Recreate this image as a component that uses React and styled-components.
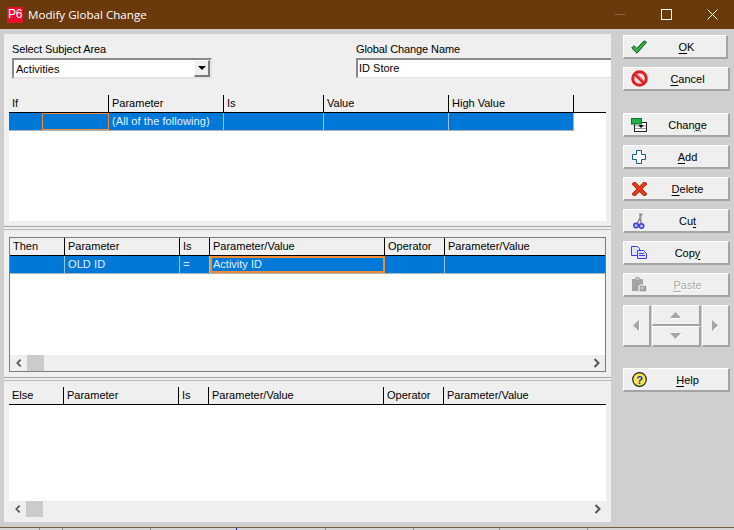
import React from "react";
import styled, { createGlobalStyle } from "styled-components";

const Global = createGlobalStyle`
  html, body { margin: 0; padding: 0; background: #cfcfcf; overflow: hidden; }
  * { box-sizing: border-box; }
  #root { width: 734px; height: 530px; }
`;

const Window = styled.div`
  width: 734px; height: 530px; display: flex; flex-direction: column;
  background: #cfcfcf; font-family: "Liberation Sans", Arial, sans-serif;
  font-size: 11px; color: #000; overflow: hidden;
`;
const TitleBar = styled.header`
  height: 29px; flex: none; background: #6b3a0c; display: flex; align-items: center;
  padding-left: 7px; color: #fff;
`;
const AppLogo = styled.span`
  width: 16px; height: 16px; background: #e8112d; color: #fff; font-size: 12px; line-height: 15px;
  text-align: center; margin-right: 5px; letter-spacing: -0.3px;
`;
const TitleText = styled.span`
  flex: 1; font-family: "Open Sans", sans-serif; font-size: 11.6px;
`;
const WinButton = styled.span`
  width: 46px; height: 29px; display: flex; align-items: center; justify-content: center;
`;
const WinButtons = styled.div`
  display: flex; margin-right: -1px;
`;
const Body = styled.div`
  flex: 1; display: flex; padding: 5px 0 0 4px; min-height: 0;
`;
const LeftColumn = styled.main`
  width: 607px; height: 488px; display: flex; flex-direction: column;
`;
const Pane = styled.section`
  background: #efefef; display: flex; flex-direction: column; padding: 0 5px; flex: none;
  height: ${p => p.$h}px; padding-top: ${p => p.$top || 0}px; padding-bottom: ${p => p.$bottom || 0}px;
`;
const Splitter = styled.div`
  height: 4px; flex: none; background: #efefef; border-top: 1px solid #a3a3a3; border-bottom: 1px solid #b9b9b9;
`;
const FormRow = styled.div`
  height: 61px; flex: none; display: flex; padding: 9px 0 0 3px; margin-right: -5px;
`;
const Field = styled.label`
  display: flex; flex-direction: column; width: ${p => p.$w ? p.$w + "px" : "auto"};
  flex: ${p => p.$w ? "none" : 1}; margin-left: ${p => p.$ml || 0}px;
`;
const FieldLabel = styled.span`
  height: 15px; line-height: 13px; letter-spacing: -0.1px;
`;
const Combo = styled.div`
  height: 21px; background: #fff; border: 2px solid; border-color: #8a8a8a #e4e4e4 #e4e4e4 #8a8a8a;
  display: flex; align-items: center; justify-content: space-between; padding-left: 2px;
`;
const ComboArrow = styled.span`
  width: 16px; height: 17px; background: #efefef; display: flex; align-items: center; justify-content: center;
  border-right: 2px solid #7a7a7a; border-bottom: 2px solid #7a7a7a; border-top: 1px solid #fff; border-left: 1px solid #fff;
  &::after { content: ""; border: 4px solid transparent; border-top: 4px solid #000; border-bottom: 0; }
`;
const TextInput = styled.div`
  height: 20px; background: #fff; border-top: 2px solid #8a8a8a; border-left: 2px solid #8a8a8a;
  border-bottom: 1px solid #e4e4e4; line-height: 17px; padding-left: 1px;
`;
const Table = styled.div`
  flex: 1; min-height: 0; background: #fff; display: flex; flex-direction: column;
  ${p => p.$framed && "border: 1px solid #7c7c7c; margin-right: 0;"}
`;
const HeaderRow = styled.div`
  height: 18px; flex: none; background: #efefef; border-bottom: 1px solid #000; display: flex;
`;
const HeaderCell = styled.div`
  width: ${p => p.$w}px; flex: none; height: 17px; line-height: 17px; padding-left: 3px; border-right: 1px solid #000;
  white-space: nowrap;
`;
const HeaderLast = styled.div`
  flex: 1; height: 17px; line-height: 17px; padding-left: 3px;
`;
const DataRow = styled.div`
  height: 18px; flex: none; display: flex; background: #0078d7; color: #e6f2fb;
  width: ${p => p.$w ? p.$w + "px" : "auto"};
  border-bottom: 1px solid #aab2b8; ${p => p.$w && "border-right: 1px solid #aab2b8;"}
`;
const DataCell = styled.div`
  width: ${p => p.$w}px; flex: ${p => p.$w ? "none" : 1}; height: 17px; line-height: 17px; padding-left: 3px;
  border-right: ${p => p.$w ? "1px solid #9fc0d8" : "0"}; letter-spacing: 0.08px; white-space: nowrap;
`;
const Spacer = styled.div`
  width: ${p => p.$w}px; flex: none; height: 17px; background: #0078d7;
`;
const FocusCell = styled.div`
  width: ${p => p.$w}px; flex: none; height: 17px; line-height: 13px; padding-left: 1px;
  border: ${p => p.$t}px solid #ef8a35; white-space: nowrap;
`;
const TableBody = styled.div`
  flex: 1; background: #fff;
`;
const ScrollBar = styled.div`
  height: ${p => p.$h}px; flex: none; background: #efefef; display: flex; align-items: flex-start; padding-left: 6px;
`;
const ScrollTrack = styled.div`
  height: 16px; flex: 1; display: flex; align-items: center;
`;
const Thumb = styled.div`
  width: 17px; height: 16px; background: #cbcbcb; margin-left: 5px;
`;
const ScrollEnd = styled.div`
  margin-left: auto; margin-right: 5px; display: flex;
`;
const ChevronBox = styled.span`
  width: 6px; height: 16px; display: flex; align-items: center;
`;
const Side = styled.aside`
  margin-left: 12px; padding-top: 1px; width: 107px; display: flex; flex-direction: column;
`;
const ActionButton = styled.button`
  width: ${p => p.$w || 107}px; height: 24px; flex: none; padding: 0; font: inherit;
  color: ${p => p.$off ? "#a8a8a8" : "#000"}; text-shadow: ${p => p.$off ? "1px 1px 0 #fff" : "none"};
  background: #efefef; border: 1px solid; border-width: 1px 2px 2px 1px;
  border-color: #fff #a4a4a4 #a4a4a4 #fff; display: flex; align-items: center;
  margin-bottom: ${p => p.$mb === undefined ? 8 : p.$mb}px;
`;
const IconSlot = styled.span`
  width: 29px; flex: none; display: flex; justify-content: center; align-items: center; padding-left: 1px;
`;
const Label = styled.span`
  flex: 1; text-align: center; padding-right: 6px;
  & u { text-decoration-thickness: 1px; text-underline-offset: 2px; }
`;
const NavPad = styled.div`
  display: flex; gap: 1px; height: 42px; width: 107px; margin-bottom: 21px;
`;
const NavSide = styled.button`
  width: 28px; padding: 0; background: #efefef; border: 1px solid; border-width: 1px 2px 2px 1px;
  border-color: #fff #a4a4a4 #a4a4a4 #fff; display: flex; align-items: center; justify-content: center;
`;
const NavMiddle = styled.div`
  flex: 1; display: flex; flex-direction: column;
`;
const NavStep = styled.button`
  flex: 1; padding: 0; background: #efefef; border: 1px solid; border-width: 1px 2px 2px 1px;
  border-color: #fff #a4a4a4 #a4a4a4 #fff; display: flex; align-items: center; justify-content: center;
`;
const BottomStrip = styled.footer`
  height: 3px; flex: none; background: #d4d4d4; border-top: 1px solid #7a5a3a; display: flex;
`;
const Tick = styled.span`
  width: ${p => p.$w}px; flex: none; border-right: 1px solid ${p => p.$c || "#8e8e8e"};
`;

const Triangle = ({ d }) => {
  const horizontal = d === "l" || d === "r";
  const pts = { l: "6,0 6,11 0,5.500", r: "0,0 0,11 6,5.500", u: "0,6 11,6 5.500,0", d: "0,0 11,0 5.500,6" }[d];
  return (
    <svg width={horizontal ? 7 : 12} height={horizontal ? 12 : 7} viewBox={horizontal ? "0 0 7 12" : "0 0 12 7"}>
      <polygon points={pts} fill="#fff" transform="translate(1 1)" />
      <polygon points={pts} fill="#a6a6a6" />
    </svg>
  );
};

const Chevron = ({ right }) => (
  <svg width="7" height="10" viewBox="0 0 7 10">
    <path d={right ? "M1.5 1l4 4-4 4" : "M5.5 1l-4 4 4 4"} fill="none" stroke="#555" strokeWidth="2" />
  </svg>
);

const icons = {
  ok: (
    <svg width="16" height="14" viewBox="0 0 16 14">
      <path d="M.7 8l2.300-2.300 2.800 2.800L13 .8l2.500 1.500L6 13.200z" fill="#2fb344" stroke="#14531f" strokeWidth="1" strokeLinejoin="round" />
    </svg>
  ),
  cancel: (
    <svg width="17" height="17" viewBox="0 0 17 17">
      <circle cx="8.500" cy="8.500" r="6.800" fill="#f7dcdc" stroke="#dc1f26" strokeWidth="3" />
      <path d="M3.800 3.800l9.400 9.400" stroke="#dc1f26" strokeWidth="3.200" />
      <path d="M5 3.500l8 8" stroke="#f7a0a0" strokeWidth=".8" />
    </svg>
  ),
  change: (
    <svg width="16" height="14" viewBox="0 0 16 14">
      <rect x="3.500" y="4.500" width="12" height="9" fill="#fff" stroke="#222" />
      <path d="M4 10.500h11M4 8h11" stroke="#999" />
      <rect x=".5" y=".5" width="10" height="5.500" fill="#22b14c" stroke="#14701f" />
      <path d="M7.500 7h5l-2.500 3z" fill="#000" />
    </svg>
  ),
  add: (
    <svg width="14" height="14" viewBox="0 0 14 14">
      <path d="M4.500.5h5v4h4v5h-4v4h-5v-4h-4v-5h4z" fill="#fff" stroke="#0f5f86" />
    </svg>
  ),
  del: (
    <svg width="15" height="14" viewBox="0 0 15 14">
      <path d="M2.500 2l10 10M12.500 2l-10 10" stroke="#8a2a18" strokeWidth="4.200" strokeLinecap="square" />
      <path d="M2.500 2l10 10M12.500 2l-10 10" stroke="#ee3a1a" strokeWidth="2.800" strokeLinecap="square" />
    </svg>
  ),
  cut: (
    <svg width="12" height="16" viewBox="0 0 12 16">
      <path d="M4.500 10L9 .5M8 10L7 .5" stroke="#8f8f8f" strokeWidth="1.700" />
      <circle cx="3" cy="12.500" r="2.300" fill="#b8b8e8" stroke="#3f3fd0" strokeWidth="1.500" />
      <circle cx="8.500" cy="13" r="2.300" fill="#b8b8e8" stroke="#3f3fd0" strokeWidth="1.500" />
    </svg>
  ),
  copy: (
    <svg width="16" height="13" viewBox="0 0 16 13">
      <path d="M.5.5h6l2 2v7h-8z" fill="#dfe4ff" stroke="#3c3ce0" />
      <path d="M6.500 4.500h6l3 3v5h-9z" fill="#dfe4ff" stroke="#3c3ce0" />
      <path d="M8 7.500h5M8 9.500h6" stroke="#3c3ce0" />
    </svg>
  ),
  paste: (
    <svg width="17" height="16" viewBox="0 0 17 16">
      <path d="M1 2h3l1-2h3l1 2h3v12H1z" fill="#a3a3a3" />
      <path d="M9 8h6l1 1v6H8V9z" fill="#a3a3a3" stroke="#fff" />
      <path d="M5.500 2h2" stroke="#fff" />
      <path d="M10 11h2" stroke="#fff" />
    </svg>
  ),
  help: (
    <svg width="15" height="15" viewBox="0 0 15 15">
      <circle cx="7.500" cy="7.500" r="6.800" fill="#f6e64b" stroke="#222" strokeWidth="1.200" />
      <text x="7.500" y="11.500" textAnchor="middle" fontSize="11" fontWeight="700" fill="#1c2fc4" fontFamily="Liberation Sans">?</text>
    </svg>
  ),
};

const Action = ({ icon, u, pre = "", post = "", off, mb, w }) => (
  <ActionButton $off={off} $mb={mb} $w={w}>
    <IconSlot>{icons[icon]}</IconSlot>
    <Label>{pre}<u>{u}</u>{post}</Label>
  </ActionButton>
);

const ScrollRow = ({ h }) => (
  <ScrollBar $h={h}>
    <ScrollTrack>
      <ChevronBox><Chevron /></ChevronBox>
      <Thumb />
      <ScrollEnd><Chevron right /></ScrollEnd>
    </ScrollTrack>
  </ScrollBar>
);

const Header = ({ cols, names }) => (
  <HeaderRow>
    {cols.map((w, i) => <HeaderCell key={i} $w={w}>{names[i]}</HeaderCell>)}
    <HeaderLast>{names[cols.length]}</HeaderLast>
  </HeaderRow>
);

const ticks = [[40, "#8e8e8e"], [23], [88], [86, "#2020c0"], [89], [88], [86], [88]];

export default function App() {
  return (
    <Window>
      <Global />
      <TitleBar>
        <AppLogo>P6</AppLogo>
        <TitleText>Modify Global Change</TitleText>
        <WinButtons>
          <WinButton>
            <svg width="11" height="11" viewBox="0 0 11 11"><path d="M0 5.500h10" stroke="#8a6a45" /></svg>
          </WinButton>
          <WinButton>
            <svg width="11" height="11" viewBox="0 0 11 11"><rect x=".5" y=".5" width="10" height="10" fill="none" stroke="#fff" /></svg>
          </WinButton>
          <WinButton>
            <svg width="11" height="11" viewBox="0 0 11 11"><path d="M.5.5l10 10M10.500.5l-10 10" stroke="#fff" /></svg>
          </WinButton>
        </WinButtons>
      </TitleBar>
      <Body>
        <LeftColumn>
          <Pane $h={192} $bottom={5}>
            <FormRow>
              <Field $w={200}>
                <FieldLabel>Select Subject Area</FieldLabel>
                <Combo>Activities<ComboArrow /></Combo>
              </Field>
              <Field $ml={144}>
                <FieldLabel>Global Change Name</FieldLabel>
                <TextInput>ID Store</TextInput>
              </Field>
            </FormRow>
            <Table>
              <Header cols={[100, 115, 100, 125, 125]} names={["If", "Parameter", "Is", "Value", "High Value", ""]} />
              <DataRow $w={565}>
                <Spacer $w={33} />
                <FocusCell $w={67} $t={1} />
                <DataCell $w={115}>(All of the following)</DataCell>
                <DataCell $w={100} />
                <DataCell $w={125} />
                <DataCell />
              </DataRow>
              <TableBody />
            </Table>
          </Pane>
          <Splitter />
          <Pane $h={147} $top={7} $bottom={5}>
            <Table $framed>
              <Header cols={[55, 115, 30, 175, 60]} names={["Then", "Parameter", "Is", "Parameter/Value", "Operator", "Parameter/Value"]} />
              <DataRow>
                <DataCell $w={55} />
                <DataCell $w={115}>OLD ID</DataCell>
                <DataCell $w={30}>=</DataCell>
                <FocusCell $w={175} $t={2}>Activity ID</FocusCell>
                <DataCell $w={60} />
                <DataCell />
              </DataRow>
              <TableBody />
              <ScrollRow h={16} />
            </Table>
          </Pane>
          <Splitter />
          <Pane $h={141} $top={6}>
            <Table>
              <Header cols={[55, 115, 30, 175, 60]} names={["Else", "Parameter", "Is", "Parameter/Value", "Operator", "Parameter/Value"]} />
              <TableBody />
              <ScrollRow h={21} />
            </Table>
          </Pane>
        </LeftColumn>
        <Side>
          <Action icon="ok" u="O" post="K" w={105} />
          <Action icon="cancel" u="C" post="ancel" mb={22} />
          <Action icon="change" pre="Chan" u="g" post="e" />
          <Action icon="add" u="A" post="dd" />
          <Action icon="del" u="D" post="elete" />
          <Action icon="cut" pre="Cu" u="t" />
          <Action icon="copy" pre="Cop" u="y" />
          <Action icon="paste" u="P" post="aste" off />
          <NavPad>
            <NavSide><Triangle d="l" /></NavSide>
            <NavMiddle>
              <NavStep><Triangle d="u" /></NavStep>
              <NavStep><Triangle d="d" /></NavStep>
            </NavMiddle>
            <NavSide><Triangle d="r" /></NavSide>
          </NavPad>
          <Action icon="help" u="H" post="elp" mb={0} />
        </Side>
      </Body>
      <BottomStrip>
        {ticks.map(([w, c], i) => <Tick key={i} $w={w} $c={c} />)}
      </BottomStrip>
    </Window>
  );
}
